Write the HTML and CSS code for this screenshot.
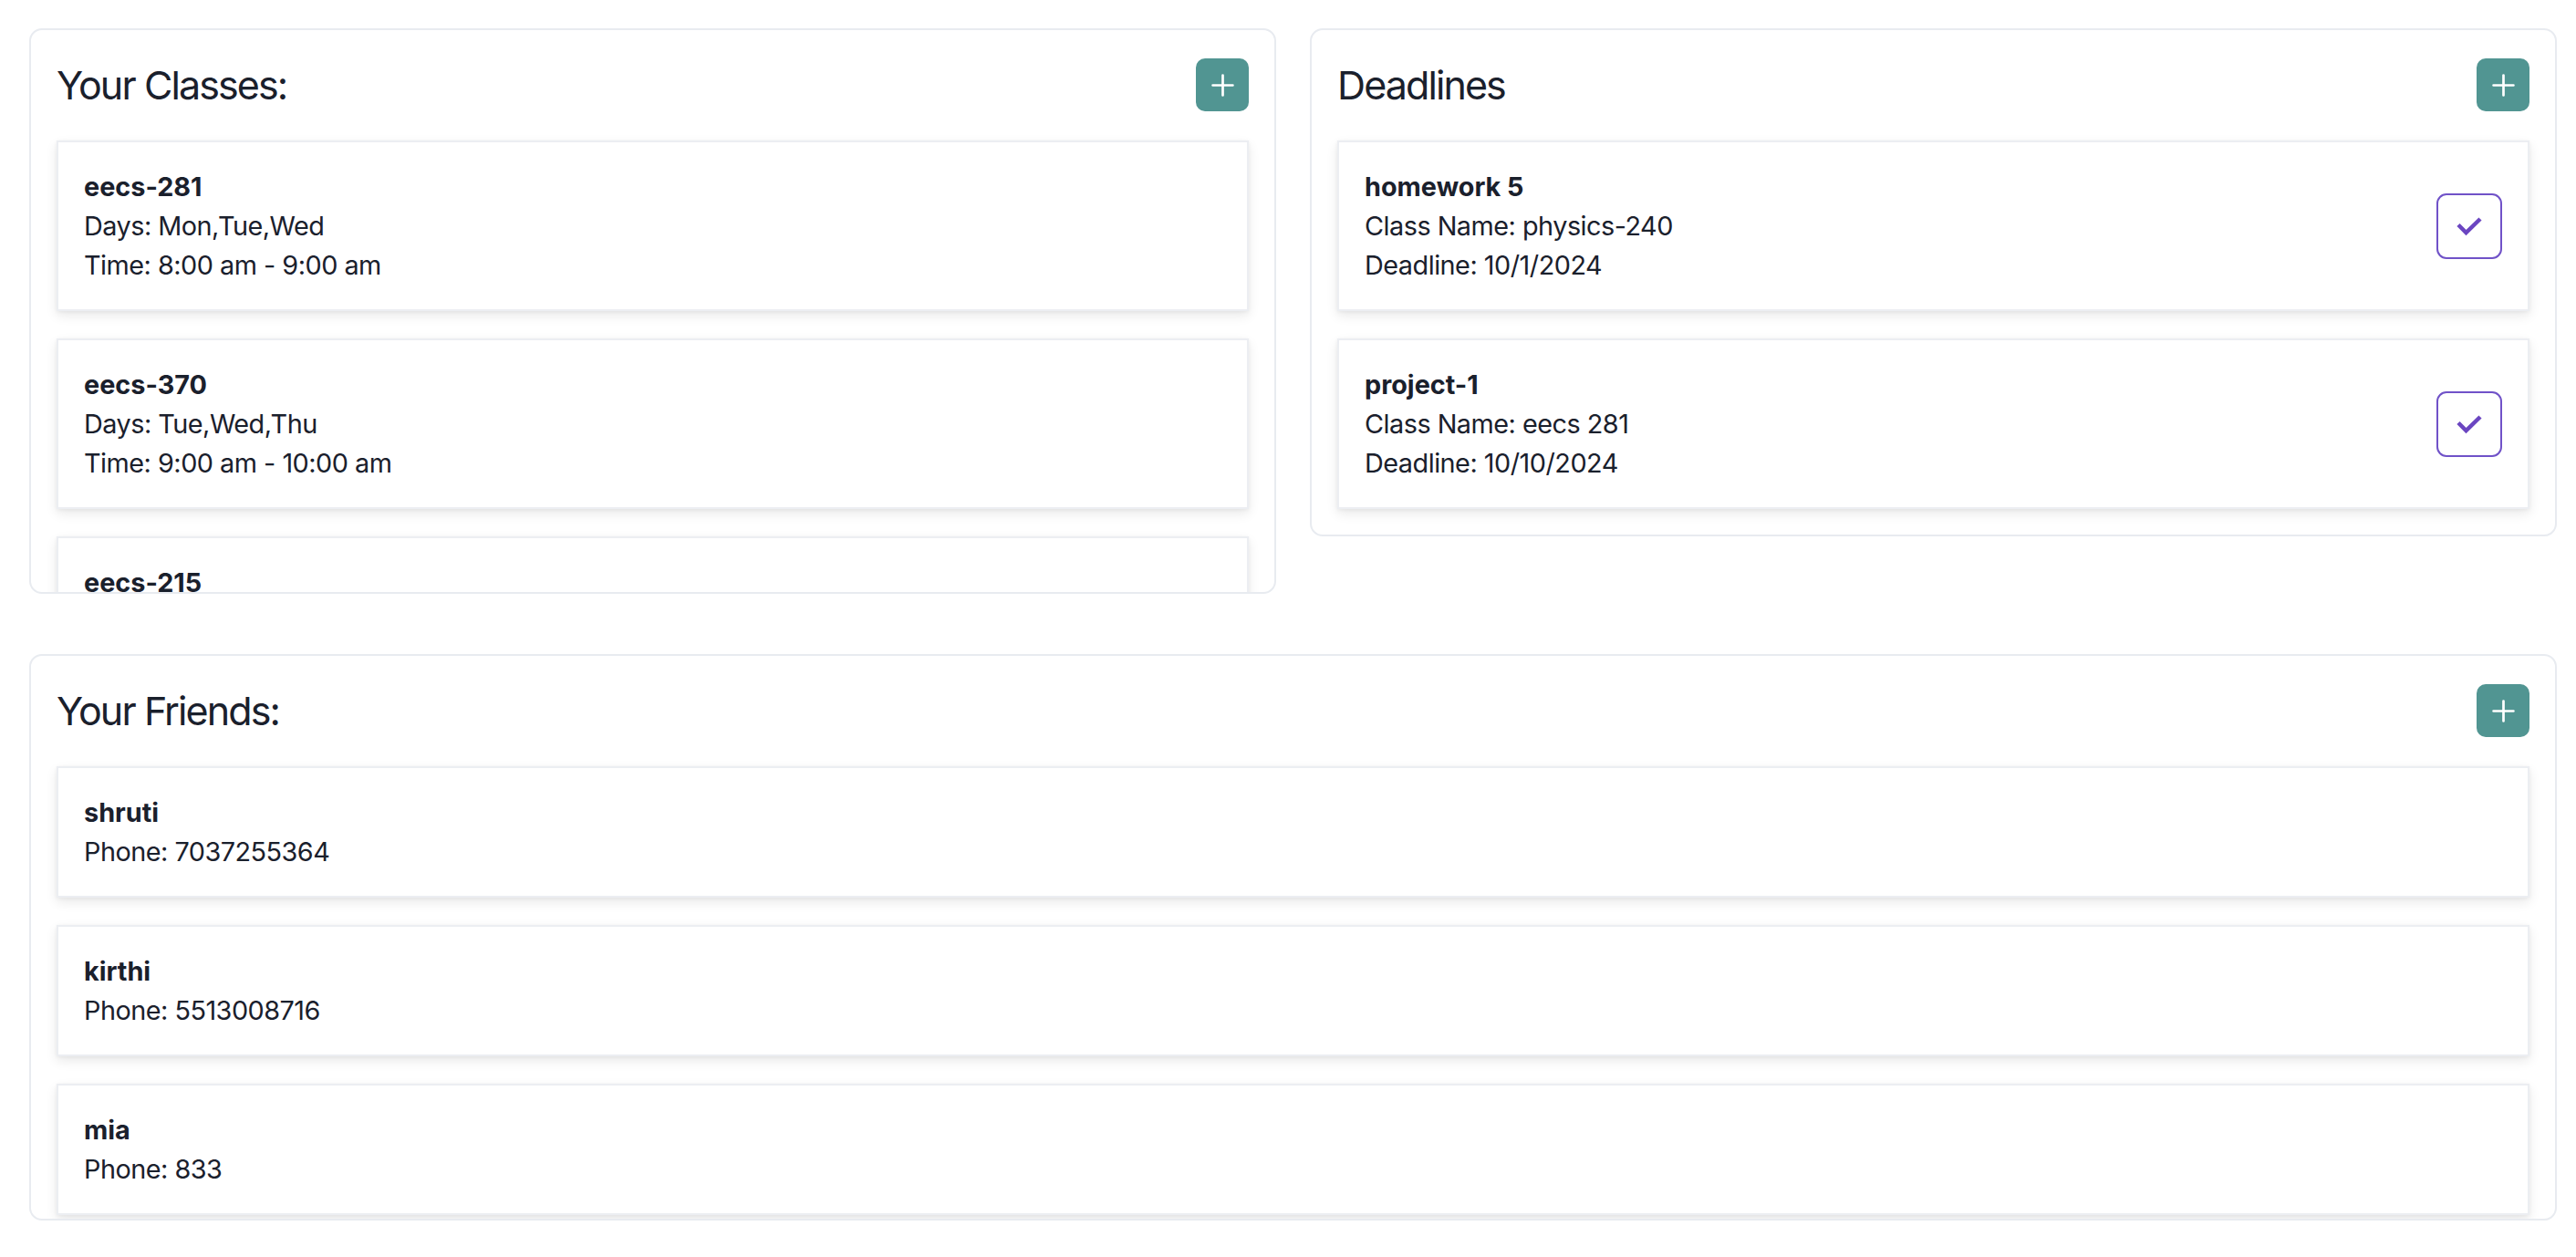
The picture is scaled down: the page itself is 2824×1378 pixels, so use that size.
FILE: index.html
```html
<!DOCTYPE html>
<html lang="en">
<head>
  <meta charset="UTF-8" />
  <title>Dashboard</title>
  <link rel="stylesheet" href="styles.css">
</head>
<body>

  <div class="page">
    <div class="top-row">

      <!-- Classes -->
      <div class="panel">
        <div class="panel-header">
          <h2>Your Classes:</h2>
          <button class="add-btn" aria-label="Add class">
            <svg width="25" height="25" viewBox="0 0 24 24"><path d="M12 1.5v21M1.5 12h21" /></svg>
          </button>
        </div>
        <div class="card-list">
          <div class="item-card">
            <div class="item-title">eecs-281</div>
            <div>Days: Mon,Tue,Wed</div>
            <div>Time: 8:00 am - 9:00 am</div>
          </div>
          <div class="item-card">
            <div class="item-title">eecs-370</div>
            <div>Days: Tue,Wed,Thu</div>
            <div>Time: 9:00 am - 10:00 am</div>
          </div>
          <!-- last card is cut off by the panel -->
          <div class="item-card tall-card">
            <div class="item-title">eecs-215</div>
          </div>
        </div>
      </div>

      <!-- Deadlines -->
      <div class="panel">
        <div class="panel-header">
          <h2>Deadlines</h2>
          <button class="add-btn" aria-label="Add deadline">
            <svg width="25" height="25" viewBox="0 0 24 24"><path d="M12 1.5v21M1.5 12h21" /></svg>
          </button>
        </div>
        <div class="card-list">
          <div class="item-card deadline-card">
            <div>
              <div class="item-title">homework 5</div>
              <div>Class Name: physics-240</div>
              <div>Deadline: 10/1/2024</div>
            </div>
            <button class="done-btn" aria-label="Mark done">
              <svg width="30" height="22" viewBox="0 0 30 22"><polyline points="3,9.5 11.5,18 27,3" /></svg>
            </button>
          </div>
          <div class="item-card deadline-card">
            <div>
              <div class="item-title">project-1</div>
              <div>Class Name: eecs 281</div>
              <div>Deadline: 10/10/2024</div>
            </div>
            <button class="done-btn" aria-label="Mark done">
              <svg width="30" height="22" viewBox="0 0 30 22"><polyline points="3,9.5 11.5,18 27,3" /></svg>
            </button>
          </div>
        </div>
      </div>

    </div>

    <!-- Friends -->
    <div class="panel friends-panel">
      <div class="panel-header">
        <h2>Your Friends:</h2>
        <button class="add-btn" aria-label="Add friend">
          <svg width="25" height="25" viewBox="0 0 24 24"><path d="M12 1.5v21M1.5 12h21" /></svg>
        </button>
      </div>
      <div class="card-list">
        <div class="item-card">
          <div class="item-title">shruti</div>
          <div>Phone: 7037255364</div>
        </div>
        <div class="item-card">
          <div class="item-title">kirthi</div>
          <div>Phone: 5513008716</div>
        </div>
        <div class="item-card">
          <div class="item-title">mia</div>
          <div>Phone: 833</div>
        </div>
      </div>
    </div>
  </div>

</body>
</html>
```

FILE: styles.css
```css
/*********************************
 * Base
 *********************************/
html, body {
  margin: 0;
  padding: 0;
  background-color: #ffffff;
  color: #1a202c;
  font-family: Inter, "Noto Sans", sans-serif;
  font-size: 28.8px;
  line-height: 43px;
  letter-spacing: -0.5px;
}

.page {
  padding: 31px 21px 0 32px;
}

/* two panels side by side */
.top-row {
  display: grid;
  grid-template-columns: 1fr 1fr;
  gap: 37px;
  align-items: start;
}

/*============================
  Panels
============================*/
.panel {
  border: 2px solid #e8ebf0;
  border-radius: 14px;
  padding: 28px;
  max-height: 620px;
  box-sizing: border-box;
  overflow: hidden;   /* list is cut off at the bottom */
}
.friends-panel {
  margin-top: 66px;
  height: 621px;
  max-height: none;
  padding-bottom: 0;
}

.panel-header {
  display: flex;
  justify-content: space-between;
  align-items: center;
  height: 64px;
  margin-bottom: 29px;
}
.panel-header h2 {
  margin: 0;
  font-size: 43px;
  font-weight: 400;
  line-height: 64px;
  letter-spacing: -1.9px;
}

.add-btn {
  width: 58px;
  height: 58px;
  border: none;
  border-radius: 10px;
  background-color: #519592;
  display: flex;
  align-items: center;
  justify-content: center;
  padding: 0;
  cursor: pointer;
}
.add-btn path {
  stroke: #ffffff;
  stroke-width: 2.6;
  stroke-linecap: round;
  fill: none;
}

/*============================
  Cards
============================*/
.card-list {
  display: flex;
  flex-direction: column;
  gap: 30px;
}

.item-card {
  background: #ffffff;
  border: 2px solid #eceef2;
  padding: 27px 28px;
  box-shadow: 0 5px 12px rgba(0, 0, 0, 0.09), 0 1px 4px rgba(0, 0, 0, 0.05);
}
.tall-card {
  min-height: 129px;
}
.item-title {
  font-weight: 700;
  letter-spacing: 0;
}

.deadline-card {
  display: flex;
  justify-content: space-between;
  align-items: center;
}

.done-btn {
  width: 72px;
  height: 72px;
  border: 2px solid #7052c8;
  border-radius: 11px;
  background: #ffffff;
  display: flex;
  align-items: center;
  justify-content: center;
  padding: 0;
  cursor: pointer;
}
.done-btn polyline {
  fill: none;
  stroke: #6b46c1;
  stroke-width: 4.5;
}
```
